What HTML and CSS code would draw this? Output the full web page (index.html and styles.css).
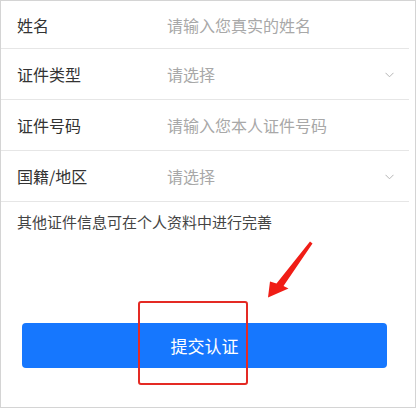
FILE: index.html
```html
<!DOCTYPE html>
<html lang="zh">
<head>
<meta charset="utf-8">
<link rel="stylesheet" href="styles.css">
</head>
<body>
<div class="frame">
  <div class="form">
    <div class="row first">
      <span class="label">姓名</span>
      <span class="value">请输入您真实的姓名</span>
    </div>
    <div class="row">
      <span class="label">证件类型</span>
      <span class="value">请选择</span>
      <svg class="chev" width="9" height="6" viewBox="0 0 9 6"><path d="M0.5 0.8 L4.5 4.8 L8.5 0.8" fill="none" stroke="#b5b5b5" stroke-width="1"/></svg>
    </div>
    <div class="row">
      <span class="label">证件号码</span>
      <span class="value">请输入您本人证件号码</span>
    </div>
    <div class="row">
      <span class="label">国籍/地区</span>
      <span class="value">请选择</span>
      <svg class="chev" width="9" height="6" viewBox="0 0 9 6"><path d="M0.5 0.8 L4.5 4.8 L8.5 0.8" fill="none" stroke="#b5b5b5" stroke-width="1"/></svg>
    </div>
  </div>
  <p class="note">其他证件信息可在个人资料中进行完善</p>
  <div class="actions">
    <button class="submit">提交认证</button>
  </div>
  <div class="highlight"></div>
  <svg class="arrow" width="417" height="409" viewBox="0 0 417 409">
    <polygon points="310,241.5 312.5,243.5 283.5,286 288.5,288.5 268,297.5 270,281.5 276.5,283.5" fill="#f01d16"/>
  </svg>
</div>
</body>
</html>
```
FILE: styles.css
```css
* { box-sizing: border-box; }
html, body { margin: 0; padding: 0; background: #fff; }
body {
  font-family: "Noto Sans CJK SC", "Noto Sans", sans-serif;
  width: 417px;
  height: 409px;
  overflow: hidden;
}
.frame {
  position: relative;
  width: 416px;
  height: 408px;
  border: 1px solid #d4d4d4;
  background: #fff;
}
.form { margin-right: 6px; }
.row {
  display: flex;
  align-items: center;
  height: 51px;
  border-bottom: 1px solid #e6e6e6;
  padding-left: 16px;
  padding-right: 15px;
  font-size: 16px;
}
.row.first { height: 48px; }
.label {
  width: 150px;
  color: #333;
  flex: none;
}
.value {
  flex: 1;
  color: #a8a8a8;
}
.chev { flex: none; margin-top: 1px; }
.note {
  margin: 0;
  padding: 7px 0 0 16px;
  font-size: 15px;
  color: #444;
  line-height: 26px;
}
.actions {
  padding: 88px 0 0 21px;
}
.submit {
  display: flex;
  align-items: center;
  justify-content: center;
  width: 365px;
  height: 45px;
  border: none;
  border-radius: 4px;
  background: #1677fe;
  color: #fff;
  font-family: "Noto Sans CJK SC", sans-serif;
  font-size: 17px;
  padding: 0;
}
.highlight {
  position: absolute;
  left: 137px;
  top: 300px;
  width: 110px;
  height: 84px;
  border: 2px solid #e42a24;
  border-radius: 3px;
}
.arrow {
  position: absolute;
  left: -1px;
  top: -1px;
}
```
